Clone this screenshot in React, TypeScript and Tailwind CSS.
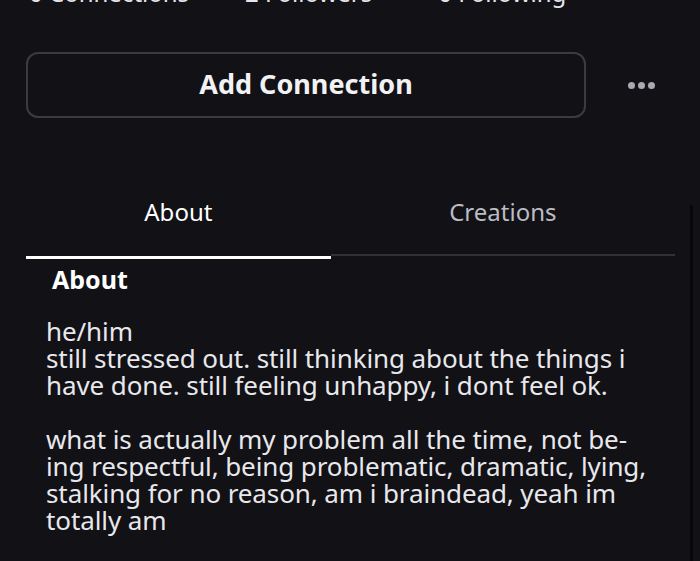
import { useState } from "react";

const bio = [
  "he/him",
  "still stressed out. still thinking about the things i",
  "have done. still feeling unhappy, i dont feel ok.",
  "",
  "what is actually my problem all the time, not be-",
  "ing respectful, being problematic, dramatic, lying,",
  "stalking for no reason, am i braindead, yeah im",
  "totally am",
];

export default function App() {
  const [tab, setTab] = useState("about");

  return (
    <div className="relative h-[561px] w-[700px] overflow-hidden bg-[#111116] text-white [font-family:'Noto_Sans',sans-serif]">
      {/* scroll track on the right */}
      <div className="absolute right-[7px] top-[205px] bottom-0 w-[3px] bg-[#08080a]" />

      {/* stats row, scrolled mostly out of view */}
      <div className="-mt-[21px] flex pl-[29px] text-[24px] leading-[27px] text-[#e6e6ea]">
        <span>0 Connections</span>
        <span className="ml-[56px]">2 Followers</span>
        <span className="ml-[66px]">0 Following</span>
      </div>

      {/* actions */}
      <div className="mt-[46px] flex items-center pl-[26px]">
        <button className="flex h-[66px] w-[560px] items-center justify-center rounded-[12px] border-2 border-[#3b3b42] pb-[2px] text-[27px] font-bold text-[#f2f2f4]">
          Add Connection
        </button>
        <button className="ml-[42px] flex items-center gap-[3px] py-2">
          <span className="h-[7px] w-[7px] rounded-full bg-[#a9a9b1]" />
          <span className="h-[7px] w-[7px] rounded-full bg-[#a9a9b1]" />
          <span className="h-[7px] w-[7px] rounded-full bg-[#a9a9b1]" />
        </button>
      </div>

      {/* tabs */}
      <div className="mt-[79px] ml-[26px] flex w-[649px]">
        <button
          onClick={() => setTab("about")}
          className={`flex-1 border-b-[3px] pb-[29px] text-[24px] leading-[30px] ${
            tab === "about" ? "border-white text-white" : "border-[#3a3a40] text-[#bcbcc4]"
          }`}
        >
          About
        </button>
        <button
          onClick={() => setTab("creations")}
          className={`flex-[1.13] pb-[29px] text-[24px] leading-[30px] ${
            tab === "creations"
              ? "border-b-[3px] border-white text-white"
              : "border-b-[3px] border-b-transparent text-[#bcbcc4] [box-shadow:inset_0_-2px_0_#303036]"
          }`}
        >
          Creations
        </button>
      </div>

      {/* about */}
      <div className="pl-[46px] pt-[5px]">
        <h2 className="ml-[6px] text-[25px] font-bold leading-[30px] text-white">About</h2>
        <div className="mt-[24px] text-[26px] leading-[27px] tracking-[-0.1px] text-[#e8e8ec]">
          {bio.map((line, i) => (
            <div key={i} className="h-[27px] whitespace-nowrap">
              {line}
            </div>
          ))}
        </div>
      </div>
    </div>
  );
}
